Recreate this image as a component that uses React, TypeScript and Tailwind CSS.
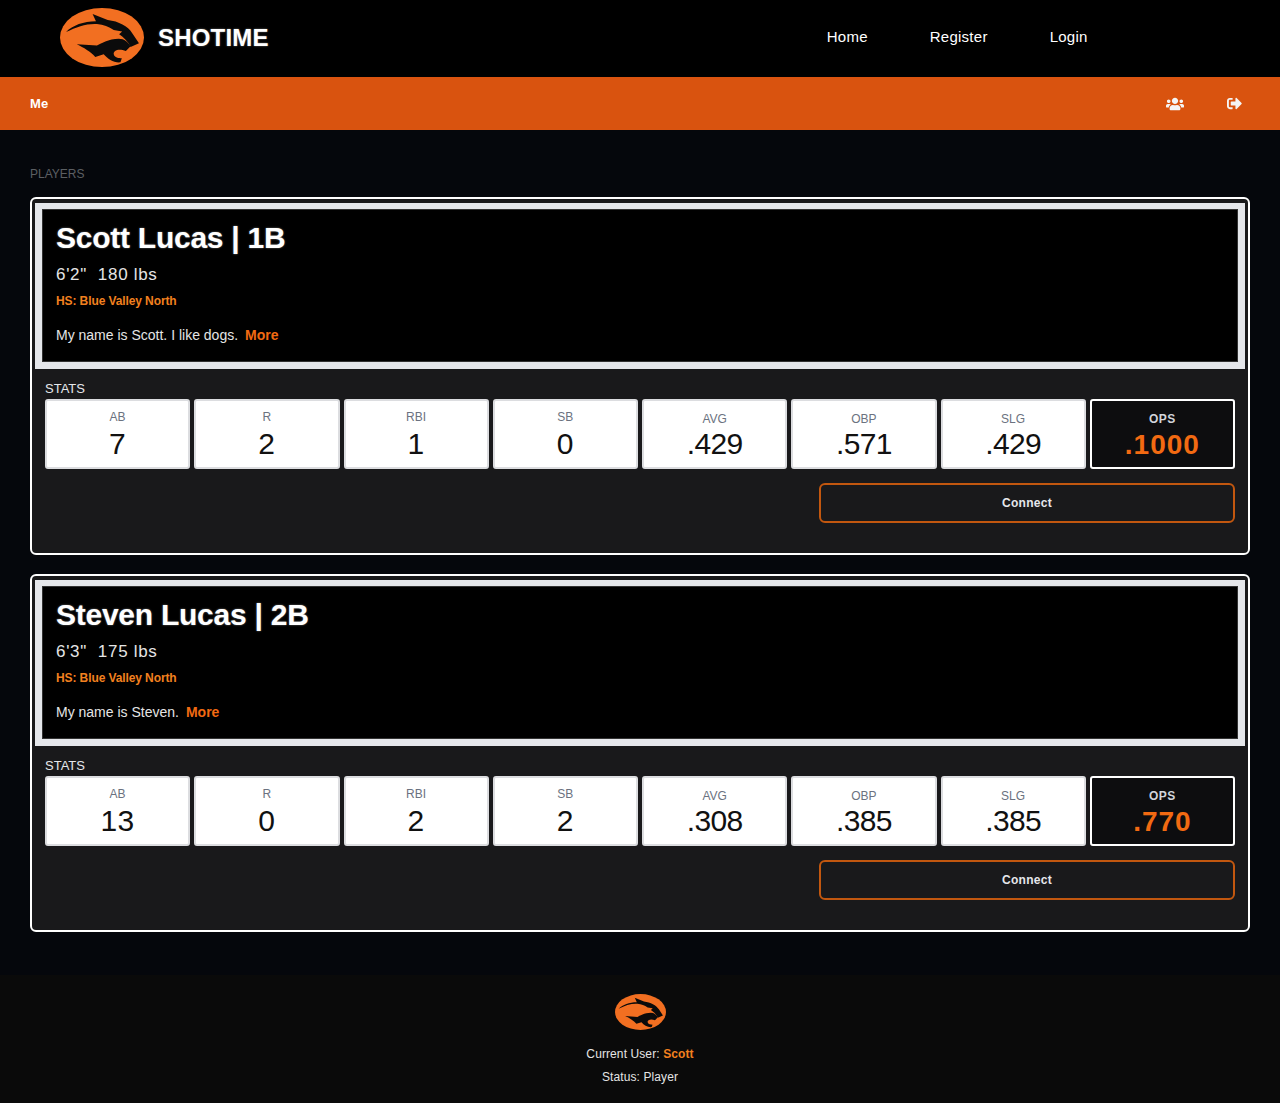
import { FaUsers, FaSignOutAlt } from "react-icons/fa";

type Stat = { label: string; value: string };
type Player = {
  name: string;
  size: string;
  school: string;
  bio: string;
  stats: Stat[];
  ops: string;
};

const players: Player[] = [
  {
    name: "Scott Lucas | 1B",
    size: "6'2\"\u00a0\u00a0180 lbs",
    school: "HS: Blue Valley North",
    bio: "My name is Scott. I like dogs.",
    stats: [
      { label: "AB", value: "7" },
      { label: "R", value: "2" },
      { label: "RBI", value: "1" },
      { label: "SB", value: "0" },
      { label: "AVG", value: ".429" },
      { label: "OBP", value: ".571" },
      { label: "SLG", value: ".429" },
    ],
    ops: ".1000",
  },
  {
    name: "Steven Lucas | 2B",
    size: "6'3\"\u00a0\u00a0175 lbs",
    school: "HS: Blue Valley North",
    bio: "My name is Steven.",
    stats: [
      { label: "AB", value: "13" },
      { label: "R", value: "0" },
      { label: "RBI", value: "2" },
      { label: "SB", value: "2" },
      { label: "AVG", value: ".308" },
      { label: "OBP", value: ".385" },
      { label: "SLG", value: ".385" },
    ],
    ops: ".770",
  },
];

const Logo = ({ className }: { className: string }) => (
  <svg viewBox="30 20 250 176" className={className}>
    <ellipse cx="155" cy="108" rx="125" ry="88" fill="#f26f21" />
    <path
      d="M48 92C68 72 100 60 137 60L127 38L172 56C205 60 232 74 245 95L265 125L240 136C232 118 218 106 206 98L215 90L190 86C175 76 160 70 140 68C110 66 80 76 48 92Z"
      fill="#0b0b0b"
    />
    <path
      d="M80 128L140 132C150 128 175 112 205 112C222 112 232 122 240 134L226 148C205 140 188 146 190 158C192 168 205 170 214 170L210 182C190 184 172 172 160 158L135 166C122 150 100 138 80 128Z"
      fill="#0b0b0b"
    />
  </svg>
);

const StatBox = ({ stat, index }: { stat: Stat; index: number }) => (
  <div className="h-[70px] rounded-[3px] bg-white border-2 border-[#dcdde0] text-center">
    <div className={`${index < 4 ? "mt-[9px]" : "mt-[11px]"} text-[12px] leading-[14px] text-[#6b7280]`}>
      {stat.label}
    </div>
    <div
      className={`${index < 4 ? "mt-[4px] tracking-[0.5px]" : "mt-[2px] tracking-[-0.7px]"} text-[30px] leading-[32px] text-[#111]`}
    >
      {stat.value}
    </div>
  </div>
);

const PlayerCard = ({ player }: { player: Player }) => (
  <div className="h-[357.5px] rounded-[6px] border-2 border-white bg-[#19191b] px-[3px] pt-[4px]">
    <div className="bg-[#e5e7eb] px-[7px] pt-[6px] pb-[7px]">
      <div className="h-[153px] border border-[#333] bg-black px-[13px] pt-[11px] text-white">
        <h2 className="text-[30px] leading-[34px] font-bold tracking-[-0.25px] [text-shadow:0_0_2px_#777]">
          {player.name}
        </h2>
        <div className="mt-[10px] text-[17px] leading-[20px] tracking-[0.7px] text-[#e5e5e5]">{player.size}</div>
        <div className="mt-[8px] text-[12px] leading-[16px] font-bold tracking-[-0.1px] text-[#f2801f]">
          {player.school}
        </div>
        <p className="mt-[17px] text-[14px] leading-[18px] text-[#e5e5e5]">
          {player.bio}
          <a className="ml-[7px] font-bold text-[#f26a12]">More</a>
        </p>
      </div>
    </div>
    <div className="px-[10px] pt-[12px]">
      <div className="text-[13px] leading-[15px] text-[#e5e7eb]">STATS</div>
      <div className="mt-[3px] grid grid-cols-8 gap-1">
        {player.stats.map((stat, index) => (
          <StatBox key={stat.label} stat={stat} index={index} />
        ))}
        <div className="h-[70px] rounded-[3px] border-2 border-white bg-[#0d0d0f] text-center">
          <div className="mt-[11px] text-[12px] leading-[14px] font-bold tracking-[0.5px] text-[#d1d5db]">OPS</div>
          <div className="mt-[3px] text-[28px] leading-[32px] font-bold tracking-[1px] text-[#f26a12]">
            {player.ops}
          </div>
        </div>
      </div>
      <div className="mt-[14px] flex justify-end">
        <button className="h-[40px] w-[416px] rounded-[6px] border-2 border-[#c2570f] text-[12px] font-bold tracking-[0.3px] text-[#e5e7eb]">
          Connect
        </button>
      </div>
    </div>
  </div>
);

export default function App() {
  return (
    <div className="min-h-[1103px] bg-[#05070c] font-['Liberation_Sans',sans-serif] text-white">
      {/* top nav */}
      <header className="flex h-[77px] items-center bg-black pb-[2px] pl-[60px]">
        <Logo className="h-[61px] w-[84px]" />
        <span className="ml-[14px] text-[24px] font-bold tracking-[0.2px] [text-shadow:0_0_2px_#777]">SHOTIME</span>
        <nav className="ml-[558px] flex gap-[62px] text-[15px] tracking-[0.25px]">
          <a>Home</a>
          <a>Register</a>
          <a>Login</a>
        </nav>
      </header>
      {/* orange bar */}
      <div className="flex h-[53px] items-center justify-between bg-[#d9530f] px-[30px] text-[13px] font-bold tracking-[0.2px]">
        <span>Me</span>
        <div className="flex items-center gap-[43px] pr-[8px]">
          <FaUsers className="h-[18px] w-[18px] text-[#f5f5f5]" />
          <FaSignOutAlt className="h-[15px] w-[15px] text-[#f5f5f5]" />
        </div>
      </div>
      {/* players */}
      <main className="h-[845px] px-[30px] pt-[36px]">
        <div className="text-[12px] leading-[16px] text-[#5c5f63]">PLAYERS</div>
        <div className="mt-[15px] flex flex-col gap-[19.5px]">
          {players.map((player) => (
            <PlayerCard key={player.name} player={player} />
          ))}
        </div>
      </main>
      {/* footer */}
      <footer className="flex h-[128px] flex-col items-center bg-[#0a0a0a] pt-[19px] text-[12px] tracking-[0.1px] text-[#e5e5e5]">
        <Logo className="h-[36px] w-[51px]" />
        <div className="mt-[16px] leading-[16px]">
          Current User: <span className="font-bold text-[#f2801f]">Scott</span>
        </div>
        <div className="mt-[7px] leading-[16px]">Status: Player</div>
      </footer>
    </div>
  );
}
